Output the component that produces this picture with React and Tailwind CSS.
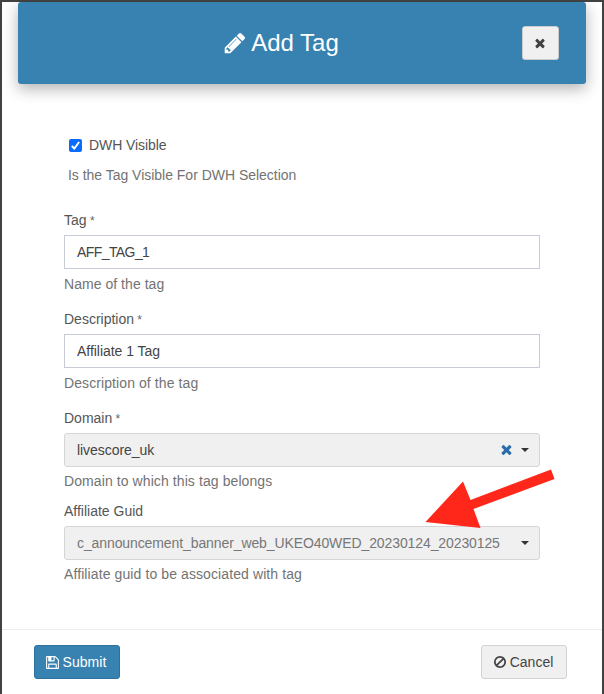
import React from "react";

const paths = {
  pencil:
    "M491 1536l91-91-235-235-91 91v107h128v128h107zm523-928q0-22-22-22-10 0-17 7l-542 542q-7 7-7 17 0 22 22 22 10 0 17-7l542-542q7-7 7-17zm-54-192l416 416-832 832h-416v-416zm683 96q0 53-37 90l-166 166-416-416 166-165q36-38 90-38 53 0 91 38l235 234q37 39 37 91z",
  times:
    "M1490 1322q0 40-28 68l-136 136q-28 28-68 28t-68-28l-294-294-294 294q-28 28-68 28t-68-28l-136-136q-28-28-28-68t28-68l294-294-294-294q-28-28-28-68t28-68l136-136q28-28 68-28t68 28l294 294 294-294q28-28 68-28t68 28l136 136q28 28 28 68t-28 68l-294 294 294 294q28 28 28 68z",
  save:
    "M512 1536h768v-384h-768v384zm896 0h128v-896q0-14-10-38.500t-20-34.500l-281-281q-10-10-34-20t-39-10v416q0 40-28 68t-68 28h-576q-40 0-68-28t-28-68v-416h-128v1280h128v-416q0-40 28-68t68-28h832q40 0 68 28t28 68v416zm-384-928v-320q0-13-9.500-22.500t-22.500-9.500h-192q-13 0-22.500 9.500t-9.500 22.500v320q0 13 9.500 22.500t22.500 9.500h192q13 0 22.500-9.500t9.500-22.500zm640 32v928q0 40-28 68t-68 28h-1344q-40 0-68-28t-28-68v-1344q0-40 28-68t68-28h928q40 0 88 20t76 48l280 280q28 28 48 76t20 88z",
  ban:
    "M1440 893q0-161-87-295l-754 753q137 89 297 89 111 0 211.500-43.500t173.500-116.500 116-174.500 43-212.500zm-999 299l755-754q-135-91-300-91-148 0-273 73t-198 199-73 274q0 162 89 299zm1223-299q0 157-61 300t-163.500 246-245 164-298.500 61-298.500-61-245-164-163.500-246-61-300 61-299.500 163.500-245.500 245-164 298.500-61 298.500 61 245 164 163.500 245.500 61 299.500z",
};

function Icon({ name, className }) {
  return (
    <svg viewBox="0 0 1792 1792" fill="currentColor" className={className} aria-hidden="true">
      <path d={paths[name]} />
    </svg>
  );
}

function Caret() {
  return <span className="h-0 w-0 border-x-4 border-t-4 border-x-transparent border-t-[#333]" />;
}

function Field({ label, required, help, helpClass = "mt-[5px] tracking-[0.09px]", className = "", children }) {
  return (
    <div className={className}>
      <div className="h-5 text-[#555]">
        {label}
        {required && <span className="text-[12px] text-[#666]"> *</span>}
      </div>
      <div className="mt-[5px]">{children}</div>
      <div className={`h-5 text-[#737373] ${helpClass}`}>{help}</div>
    </div>
  );
}

function TextBox({ value, className = "" }) {
  return (
    <input
      readOnly
      value={value}
      className={`block h-[34px] w-full border border-[#c7cbd6] bg-white px-3 text-[#444] outline-none ${className}`}
    />
  );
}

function SelectBox({ value, clearable, muted }) {
  return (
    <div className="flex h-[34px] items-center rounded-[3px] border border-[#d5d5d5] bg-[#f0f0f0] pr-[10px] pl-3">
      <span className={muted ? "flex-1 tracking-[-0.1px] text-[#777]" : "flex-1 tracking-[-0.05px] text-[#444]"}>
        {value}
      </span>
      {clearable && <Icon name="times" className="mr-[7px] mb-[2px] h-[15px] w-[15px] text-[#2b6cab]" />}
      <Caret />
    </div>
  );
}

export default function App() {
  return (
    <div className="relative h-[694px] w-[604px] overflow-hidden bg-[#414141] px-[2px] pt-[2px] font-['Liberation_Sans',Arial,sans-serif] text-[14px] leading-5">
      <div className="flex h-[692px] flex-col overflow-hidden bg-white">
        <header className="mx-4 flex h-[82px] shrink-0 items-center rounded-[3px] bg-[#3782b1] pr-[27px] shadow-[0_5px_15px_rgba(0,0,0,0.3)]">
          <h1 className="flex flex-1 items-center justify-center pl-[22px] text-2xl font-normal text-white">
            <Icon name="pencil" className="mr-[4px] h-6 w-6" />
            Add Tag
          </h1>
          <button className="flex h-[34px] w-[37px] items-center justify-center rounded-[3px] border border-[#ccc] bg-[#f0f0f0] pr-[2px] text-[#404040]">
            <Icon name="times" className="mb-px h-[14px] w-[14px]" />
          </button>
        </header>

        <main className="flex-1 px-[62px] pt-[51px]">
          <label className="flex h-5 items-center pl-[5px] tracking-[-0.08px] text-[#555]">
            <span className="mr-[7px] flex h-[13px] w-[13px] items-center justify-center rounded-[2px] bg-[#0a6cff]">
              <svg viewBox="0 0 13 13" className="h-[13px] w-[13px]" fill="none" stroke="white" strokeWidth="2">
                <path d="M2.8 7L5.3 9.5L10.1 3" />
              </svg>
            </span>
            DWH Visible
          </label>
          <p className="mt-[10px] h-5 pl-1 tracking-[-0.02px] text-[#737373]">Is the Tag Visible For DWH Selection</p>

          <Field className="mt-[25px]" label="Tag" required help="Name of the tag" helpClass="mt-[5px] tracking-[0.04px]">
            <TextBox value="AFF_TAG_1" className="tracking-[-0.58px]" />
          </Field>
          <Field className="mt-[15px]" label="Description" required help="Description of the tag">
            <TextBox value="Affiliate 1 Tag" className="tracking-[-0.04px]" />
          </Field>
          <Field
            className="mt-[15px]"
            label="Domain"
            required
            help="Domain to which this tag belongs"
            helpClass="mt-[4px] tracking-[0.09px]"
          >
            <SelectBox value="livescore_uk" clearable />
          </Field>
          <Field
            className="mt-[10px]"
            label="Affiliate Guid"
            help="Affiliate guid to be associated with tag"
            helpClass="mt-[4px] tracking-[0.1px]"
          >
            <SelectBox value="c_announcement_banner_web_UKEO40WED_20230124_20230125" muted />
          </Field>
        </main>

        <footer className="flex h-[65px] shrink-0 items-start justify-between border-t border-[#ececec] pt-[15px] pr-[35px] pl-8">
          <button className="flex h-[34px] w-[86px] items-center justify-center rounded-[3px] border border-[#2d71a0] bg-[#3782b1] pr-[2px] tracking-[0.08px] text-white">
            <Icon name="save" className="mr-[2px] h-[15px] w-[15px]" />
            Submit
          </button>
          <button className="flex h-[34px] w-[86px] items-center justify-center rounded-[3px] border border-[#d2d2d2] bg-[#f0f0f0] pr-[2px] text-[#444]">
            <Icon name="ban" className="mr-[3px] h-[14px] w-[14px]" />
            Cancel
          </button>
        </footer>
      </div>

      <svg viewBox="0 0 132 62" className="absolute top-[467px] left-[424px] h-[62px] w-[132px]" aria-hidden="true">
        <path d="M1.500 55L39 14.500L46.500 33L127 2.500L130.500 12L49.500 42L56.500 61Z" fill="#ff271a" />
      </svg>
    </div>
  );
}
